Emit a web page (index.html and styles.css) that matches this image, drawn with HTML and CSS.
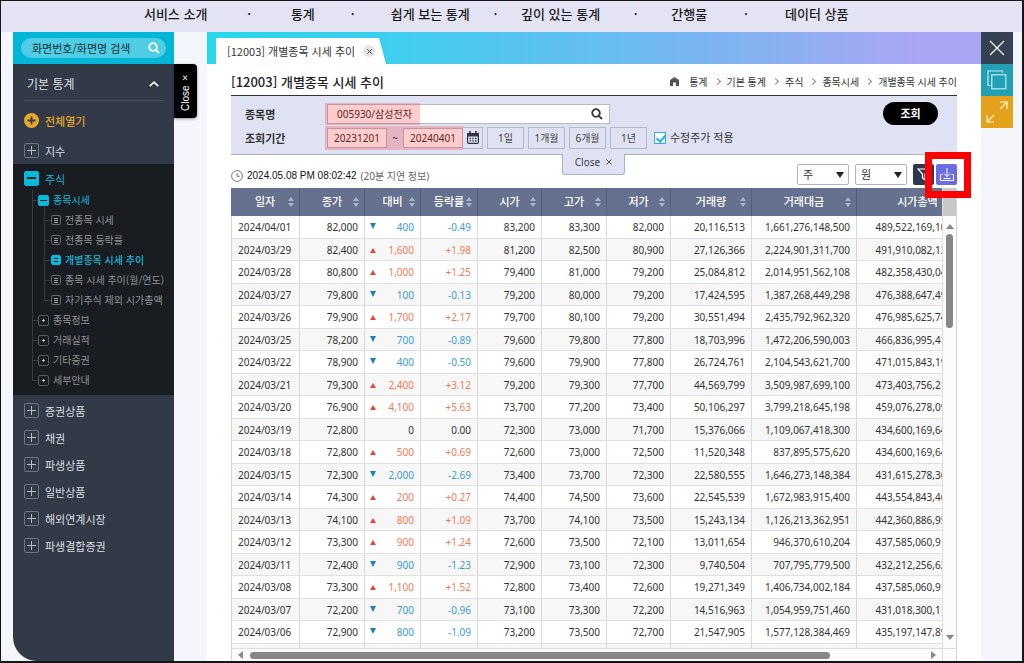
FILE: index.html
```html
<!DOCTYPE html>
<html lang="ko">
<head>
<meta charset="utf-8">
<meta name="viewport" content="width=device-width, initial-scale=1">
<title>[12003] 개별종목 시세 추이</title>
<link rel="stylesheet" href="styles.css">
</head>
<body>
<div class="app">
  <nav class="topnav" aria-label="주 메뉴">
    <a href="#">서비스 소개</a><i>·</i><a href="#">통계</a><i>·</i><a href="#">쉽게 보는 통계</a><i>·</i><a href="#">깊이 있는 통계</a><i>·</i><a href="#">간행물</a><i>·</i><a href="#">데이터 상품</a>
  </nav>

  <div class="layout">
    <aside class="sidebar">
      <form class="side-search">
        <div class="pill">
          <input type="text" aria-label="화면 검색" placeholder="화면번호/화면명 검색">
          <button type="button" aria-label="검색"><svg width="12" height="12" viewBox="0 0 12 12" fill="none" stroke="#fff" stroke-width="1.8"><circle cx="5" cy="5" r="3.8"/><path d="M8 8l3 3"/></svg></button>
        </div>
      </form>
      <button type="button" class="side-title">기본 통계
        <svg width="10" height="6" viewBox="0 0 10 6" fill="none" stroke="#fff" stroke-width="1.6"><path d="M.8 5.2L5 1.2l4.200 4"/></svg>
      </button>
      <a href="#" class="open-all"><svg width="15" height="15" viewBox="0 0 15 15"><circle cx="7.500" cy="7.500" r="7.500" fill="#e9a826"/><path d="M7.500 3.500v8M3.500 7.500h8" stroke="#313a46" stroke-width="1.800"/></svg>전체열기</a>
      <ul class="menu">
        <li><a href="#" class="m1"><span class="box plus"></span>지수</a></li>
        <li class="opened">
          <a href="#" class="m1 on"><span class="box minus"></span>주식</a>
          <ul class="tree">
            <li>
              <a href="#" class="m2 on"><span class="box2 minus"></span>종목시세</a>
              <ul class="leaves">
                <li><a href="#"><span class="doc"></span>전종목 시세</a></li>
                <li><a href="#"><span class="doc"></span>전종목 등락률</a></li>
                <li><a href="#" class="on"><span class="doc"></span>개별종목 시세 추이</a></li>
                <li><a href="#"><span class="doc"></span>종목 시세 추이(월/연도)</a></li>
                <li><a href="#"><span class="doc"></span>자기주식 제외 시가총액</a></li>
              </ul>
            </li>
            <li><a href="#" class="m2"><span class="box2 plus"></span>종목정보</a></li>
            <li><a href="#" class="m2"><span class="box2 plus"></span>거래실적</a></li>
            <li><a href="#" class="m2"><span class="box2 plus"></span>기타증권</a></li>
            <li><a href="#" class="m2"><span class="box2 plus"></span>세부안내</a></li>
          </ul>
        </li>
        <li><a href="#" class="m1"><span class="box plus"></span>증권상품</a></li>
        <li><a href="#" class="m1"><span class="box plus"></span>채권</a></li>
        <li><a href="#" class="m1"><span class="box plus"></span>파생상품</a></li>
        <li><a href="#" class="m1"><span class="box plus"></span>일반상품</a></li>
        <li><a href="#" class="m1"><span class="box plus"></span>해외연계시장</a></li>
        <li><a href="#" class="m1"><span class="box plus"></span>파생결합증권</a></li>
      </ul>
    </aside>

    <div class="side-gutter"><button type="button" class="side-close">Close ×</button></div>

    <main class="main">
      <div class="tabbar">
        <div class="tab"><span>[12003] 개별종목 시세 추이</span>
          <button type="button" aria-label="탭 닫기"><svg width="5" height="5" viewBox="0 0 5 5" stroke="#444" stroke-width="1"><path d="M.3 .3l4.400 4.400M4.700 .3L.3 4.700"/></svg></button>
        </div>
      </div>

      <div class="content">
        <header class="title-row">
          <h1>[12003] 개별종목 시세 추이</h1>
          <nav class="crumbs" aria-label="현재 위치">
            <svg width="9" height="9" viewBox="0 0 9 9" fill="#555"><path d="M4.500 0L9 3v6H5.900V5.500H3.100V9H0V3z"/></svg>
            <a href="#">통계</a><i></i><a href="#">기본 통계</a><i></i><a href="#">주식</a><i></i><a href="#">종목시세</a><i></i><a href="#">개별종목 시세 추이</a>
          </nav>
        </header>

        <form class="filter">
          <div class="fields">
            <label class="name" for="stock">종목명</label>
            <div class="control">
              <div class="stock">
                <input id="stock" type="text" value="005930/삼성전자">
                <button type="button" aria-label="종목 검색"><svg width="12" height="12" viewBox="0 0 12 12" fill="none" stroke="#333" stroke-width="1.800"><circle cx="5" cy="5" r="3.800"/><path d="M7.800 7.800l3.200 3.200"/></svg></button>
              </div>
              <span class="mark mark-stock"></span>
            </div>
            <label class="name" for="from">조회기간</label>
            <div class="control">
              <input id="from" class="date" type="text" value="20231201">
              <span class="tilde">~</span>
              <input class="date" type="text" aria-label="종료일" value="20240401">
              <button type="button" class="cal" aria-label="달력"><svg width="12" height="13" viewBox="0 0 12 13"><rect x=".600" y="2.600" width="10.800" height="9.800" rx="1.200" fill="none" stroke="#2e3547" stroke-width="1.200"/><path d="M0 2h12v3.500H0z" fill="#2e3547"/><path d="M3 0v3M9 0v3" stroke="#2e3547" stroke-width="1.600"/><path d="M5.300 7.500h1.400M8 7.500h1.400M2.600 9.900H4M5.300 9.900h1.400M8 9.900h1.400M2.600 7.500H4" stroke="#2e3547" stroke-width="1.300"/></svg></button>
              <button type="button" class="range">1일</button>
              <button type="button" class="range">1개월</button>
              <button type="button" class="range">6개월</button>
              <button type="button" class="range">1년</button>
              <input id="adj" class="check" type="checkbox" checked><label for="adj" class="check-label">수정주가 적용</label>
              <span class="mark mark-dates"></span>
            </div>
          </div>
          <button type="button" class="submit">조회</button>
          <button type="button" class="fold">Close <svg width="6" height="6" viewBox="0 0 6 6" stroke="#555" stroke-width="1"><path d="M.5 .5l5 5M5.500 .5l-5 5"/></svg></button>
        </form>

        <div class="toolbar">
          <svg width="12" height="12" viewBox="0 0 12 12" fill="none" stroke="#777" stroke-width="1"><circle cx="6" cy="6" r="5.400"/><path d="M6 3v3.300h2.800"/></svg>
          <span class="stamp">2024.05.08 PM 08:02:42</span>
          <span class="delay">(20분 지연 정보)</span>
          <div class="tools">
            <div class="pick"><select aria-label="수량 단위"><option>주</option></select></div>
            <div class="pick"><select aria-label="금액 단위"><option>원</option></select></div>
            <button type="button" class="tool funnel" aria-label="필터"><svg width="13" height="13" viewBox="0 0 13 13" fill="none" stroke="#fff" stroke-width="1.200"><path d="M1 1h11L8 6v6L5.500 10V6z"/></svg></button>
            <button type="button" class="tool download" aria-label="다운로드"><svg width="14" height="13" viewBox="0 0 14 13" fill="none" stroke="#fff" stroke-width="1"><path d="M7 0v8.500M3.800 5.500L7 8.700l3.200-3.200M2.500 6.500H.5v6h13v-6h-2M3.500 10.500h7"/></svg><span class="spot"></span></button>
          </div>
        </div>

        <div class="sheet">
          <div class="viewport">
            <table>
              <colgroup><col class="w69"><col class="w65"><col class="w56"><col class="w57"><col class="w64"><col class="w65"><col class="w64"><col class="w81"><col class="w105"><col class="w122"></colgroup>
              <thead><tr><th>일자<s></s></th><th>종가<s></s></th><th>대비<s></s></th><th>등락률<s></s></th><th>시가<s></s></th><th>고가<s></s></th><th>저가<s></s></th><th>거래량<s></s></th><th>거래대금<s></s></th><th>시가총액<s></s></th></tr></thead>
              <tbody>
                <tr class="dn"><td>2024/04/01</td><td>82,000</td><td>400</td><td>-0.49</td><td>83,200</td><td>83,300</td><td>82,000</td><td>20,116,513</td><td>1,661,276,148,500</td><td>489,522,169,100,000</td></tr>
                <tr class="up"><td>2024/03/29</td><td>82,400</td><td>1,600</td><td>+1.98</td><td>81,200</td><td>82,500</td><td>80,900</td><td>27,126,366</td><td>2,224,901,311,700</td><td>491,910,082,120,000</td></tr>
                <tr class="up"><td>2024/03/28</td><td>80,800</td><td>1,000</td><td>+1.25</td><td>79,400</td><td>81,000</td><td>79,200</td><td>25,084,812</td><td>2,014,951,562,108</td><td>482,358,430,040,000</td></tr>
                <tr class="dn"><td>2024/03/27</td><td>79,800</td><td>100</td><td>-0.13</td><td>79,200</td><td>80,000</td><td>79,200</td><td>17,424,595</td><td>1,387,268,449,298</td><td>476,388,647,490,000</td></tr>
                <tr class="up"><td>2024/03/26</td><td>79,900</td><td>1,700</td><td>+2.17</td><td>79,700</td><td>80,100</td><td>79,200</td><td>30,551,494</td><td>2,435,792,962,320</td><td>476,985,625,745,000</td></tr>
                <tr class="dn"><td>2024/03/25</td><td>78,200</td><td>700</td><td>-0.89</td><td>79,600</td><td>79,800</td><td>77,800</td><td>18,703,996</td><td>1,472,206,590,003</td><td>466,836,995,410,000</td></tr>
                <tr class="dn"><td>2024/03/22</td><td>78,900</td><td>400</td><td>-0.50</td><td>79,600</td><td>79,900</td><td>77,800</td><td>26,724,761</td><td>2,104,543,621,700</td><td>471,015,843,195,000</td></tr>
                <tr class="up"><td>2024/03/21</td><td>79,300</td><td>2,400</td><td>+3.12</td><td>79,200</td><td>79,300</td><td>77,700</td><td>44,569,799</td><td>3,509,987,699,100</td><td>473,403,756,215,000</td></tr>
                <tr class="up"><td>2024/03/20</td><td>76,900</td><td>4,100</td><td>+5.63</td><td>73,700</td><td>77,200</td><td>73,400</td><td>50,106,297</td><td>3,799,218,645,198</td><td>459,076,278,095,000</td></tr>
                <tr><td>2024/03/19</td><td>72,800</td><td>0</td><td>0.00</td><td>72,300</td><td>73,000</td><td>71,700</td><td>15,376,066</td><td>1,109,067,418,300</td><td>434,600,169,640,000</td></tr>
                <tr class="up"><td>2024/03/18</td><td>72,800</td><td>500</td><td>+0.69</td><td>72,600</td><td>73,000</td><td>72,500</td><td>11,520,348</td><td>837,895,575,620</td><td>434,600,169,640,000</td></tr>
                <tr class="dn"><td>2024/03/15</td><td>72,300</td><td>2,000</td><td>-2.69</td><td>73,400</td><td>73,700</td><td>72,300</td><td>22,580,555</td><td>1,646,273,148,384</td><td>431,615,278,365,000</td></tr>
                <tr class="up"><td>2024/03/14</td><td>74,300</td><td>200</td><td>+0.27</td><td>74,400</td><td>74,500</td><td>73,600</td><td>22,545,539</td><td>1,672,983,915,400</td><td>443,554,843,465,000</td></tr>
                <tr class="up"><td>2024/03/13</td><td>74,100</td><td>800</td><td>+1.09</td><td>73,700</td><td>74,100</td><td>73,500</td><td>15,243,134</td><td>1,126,213,362,951</td><td>442,360,886,955,000</td></tr>
                <tr class="up"><td>2024/03/12</td><td>73,300</td><td>900</td><td>+1.24</td><td>72,600</td><td>73,500</td><td>72,100</td><td>13,011,654</td><td>946,370,610,204</td><td>437,585,060,915,000</td></tr>
                <tr class="dn"><td>2024/03/11</td><td>72,400</td><td>900</td><td>-1.23</td><td>72,900</td><td>73,100</td><td>72,300</td><td>9,740,504</td><td>707,795,779,500</td><td>432,212,256,620,000</td></tr>
                <tr class="up"><td>2024/03/08</td><td>73,300</td><td>1,100</td><td>+1.52</td><td>72,800</td><td>73,400</td><td>72,600</td><td>19,271,349</td><td>1,406,734,002,184</td><td>437,585,060,915,000</td></tr>
                <tr class="dn"><td>2024/03/07</td><td>72,200</td><td>700</td><td>-0.96</td><td>73,100</td><td>73,300</td><td>72,200</td><td>14,516,963</td><td>1,054,959,751,460</td><td>431,018,300,110,000</td></tr>
                <tr class="dn"><td>2024/03/06</td><td>72,900</td><td>800</td><td>-1.09</td><td>73,200</td><td>73,500</td><td>72,700</td><td>21,547,905</td><td>1,577,128,384,469</td><td>435,197,147,895,000</td></tr>
                <tr><td></td><td></td><td></td><td></td><td></td><td></td><td></td><td></td><td></td><td></td></tr>
              </tbody>
            </table>
          </div>
          <div class="vbar"><span class="vcap"></span><span class="arrow a-up"></span><span class="vtrack"><span class="vthumb"></span></span><span class="arrow a-down"></span></div>
          <div class="hbar"><span class="arrow a-left"></span><span class="htrack"><span class="hthumb"></span></span><span class="arrow a-right"></span></div>
          <div class="corner"></div>
        </div>
      </div>
    </main>

    <div class="side-tools">
      <button type="button" class="t-close" aria-label="닫기"><svg width="16" height="16" viewBox="0 0 16 16" stroke="#fff" stroke-width="1.200"><path d="M1 1l14 14M15 1L1 15"/></svg></button>
      <button type="button" class="t-copy" aria-label="새 창"><svg width="20" height="20" viewBox="0 0 20 20" fill="none" stroke="#b9eef5" stroke-width="1.200"><path d="M15.500 3V1H1v14.500h2.500"/><rect x="4.800" y="4.800" width="14" height="14"/></svg></button>
      <button type="button" class="t-full" aria-label="전체 화면"><svg width="22" height="22" viewBox="0 0 22 22" fill="none" stroke="#fff3c8" stroke-width="1.200"><path d="M14 8l7-7M14 1h7v7M8 14l-7 7M1 14v7h7"/></svg></button>
    </div>
  </div>
</div>
</body>
</html>
```
FILE: styles.css
```css
* { box-sizing: border-box; }

body {
  margin: 0;
  font-family: "Noto Sans", "Noto Sans CJK KR", sans-serif;
  font-size: 11px;
  line-height: 16px;
  color: #333;
}

a { color: inherit; text-decoration: none; }
ul { list-style: none; margin: 0; padding: 0; }
i, s { font-style: normal; text-decoration: none; }
svg { display: block; flex: none; }
button, input, select { font: inherit; color: inherit; margin: 0; padding: 0; border: 0; background: none; }
button { cursor: pointer; }

.app {
  display: flex;
  flex-direction: column;
  height: 100vh;
  border: 1px solid #15151a;
  border-right-width: 2px;
  border-bottom-width: 2px;
  background: #f4f6fb;
  overflow: hidden;
}

/* top navigation */
.topnav {
  display: grid;
  grid-template-columns: auto 88fr auto 80fr auto 54fr auto 75fr auto 82fr auto;
  align-items: center;
  height: 31px;
  padding: 0 17% 6px 14%;
  background: #e3e3f3;
  font-family: "Noto Sans CJK KR", sans-serif;
  font-size: 13px;
  font-weight: 500;
  color: #1c1c22;
}
.topnav i { text-align: center; }

.layout { flex: 1; min-height: 0; display: flex; padding: 0 9px 0 12px; }

/* sidebar */
.sidebar {
  width: 161px;
  flex: none;
  background: #313a46;
  border-radius: 0 0 0 24px;
  overflow: hidden;
  color: #dcdfe3;
  font-family: "Noto Sans CJK KR", sans-serif;
}
.side-search { padding: 6px 8px; background: #00b6d6; }
.pill {
  display: flex;
  align-items: center;
  height: 20px;
  padding: 0 6px 0 11px;
  border-radius: 10px;
  background: #4fcde4;
}
.pill input { flex: 1; min-width: 0; height: 20px; outline: 0; color: #14303a; }
.pill input::placeholder { color: #14303a; opacity: 1; }
.side-title {
  display: flex;
  align-items: center;
  justify-content: space-between;
  width: 139px;
  height: 37px;
  margin: 0 11px;
  padding: 4px 4px 0 3px;
  border-bottom: 1px solid #4b535f;
  font-size: 12px;
}
.open-all { display: flex; align-items: center; gap: 6px; height: 36px; padding: 3px 0 0 11px; font-weight: 500; color: #e5a328; }
.m1 { display: flex; align-items: center; gap: 6px; height: 27px; padding-left: 11px; }
.m1.on, .m2.on, .leaves .on { color: #19b7d8; }
.m1.on { height: 26px; padding-top: 3px; }

.box, .box2 {
  position: relative;
  flex: none;
  width: 15px;
  height: 15px;
  border: 1px solid #6d7580;
  border-radius: 2px;
}
.box2 { width: 11px; height: 11px; border-color: #555a60; }
.box::before, .box.plus::after, .box2::before, .box2.plus::after {
  content: "";
  position: absolute;
  inset: 6px 2px;
  background: #b6bbc2;
}
.box.plus::after { inset: 2px 6px; }
.box2::before { inset: 4px 3px; }
.box2.plus::after { inset: 3px 4px; }
.on .minus, .on.m2 .minus { border-color: #0cb8da; background: #0cb8da; }
.on .box.minus::before { inset: 5px 2px 6px; background: #14242c; }
.on .box2.minus::before { inset: 4px 1px; background: #14242c; }

.opened { padding-bottom: 5px; margin-bottom: 2px; background: #191d22; }
.tree { position: relative; font-size: 10px; color: #8f9195; }
.tree::before {
  content: "";
  position: absolute;
  left: 19px;
  top: 0;
  bottom: 10px;
  border-left: 1px solid #373b41;
}
.m2 { position: relative; display: flex; align-items: center; gap: 4px; height: 20px; padding-left: 25px; }
.m2::before, .leaves a::before {
  content: "";
  position: absolute;
  left: 19px;
  width: 6px;
  border-top: 1px solid #373b41;
}
.leaves { position: relative; }
.leaves::before {
  content: "";
  position: absolute;
  left: 31px;
  top: -4px;
  bottom: 10px;
  border-left: 1px solid #373b41;
}
.leaves a { position: relative; display: flex; align-items: center; gap: 4px; height: 20px; padding-left: 38px; white-space: nowrap; }
.leaves a::before { left: 31px; width: 7px; }
.leaves .on { font-weight: 500; }
.doc {
  flex: none;
  width: 10px;
  height: 10px;
  border: 1px solid #62666b;
  border-radius: 2px;
  background: repeating-linear-gradient(#9a9ca0 0 1px, transparent 1px 2px) center / 4px 5px no-repeat;
}
.on .doc { border-color: #0cb8da; background: linear-gradient(#191d22 1px, transparent 1px 3px, #191d22 3px) center / 4px 4px no-repeat #0cb8da; }

.side-gutter { width: 33px; flex: none; padding-top: 32px; }
.side-close {
  width: 23px;
  height: 54px;
  border-radius: 4px 0 0 4px;
  background: #000;
  color: #fff;
  font-family: "Liberation Sans", sans-serif;
  font-size: 10px;
  writing-mode: vertical-rl;
  transform: rotate(180deg);
  box-shadow: 0 -1px 3px rgba(0, 0, 0, .4);
}

/* main panel */
.main { flex: 1; min-width: 0; display: flex; flex-direction: column; background: #fff; }
.tabbar {
  flex: none;
  padding: 6px 9px 0;
  background: linear-gradient(90deg, #27d8e9, #3fcdee 25%, #7bb4f0 65%, #a9a6f3 92%);
}
.tab {
  display: flex;
  align-items: center;
  gap: 8px;
  width: 170px;
  height: 26px;
  padding-left: 11px;
  background: #fff;
  clip-path: polygon(0 0, 163px 0, 170px 100%, 0 100%);
  font-family: "Noto Sans CJK KR", sans-serif;
  white-space: nowrap;
}
.tab button { display: grid; place-items: center; width: 12px; height: 12px; border-radius: 6px; background: #e4e4e4; }

.content { flex: 1; min-height: 0; display: flex; flex-direction: column; padding: 0 24px; }
.title-row { display: flex; align-items: center; justify-content: space-between; height: 32px; padding-top: 4px; border-bottom: 1px solid #333; flex: none; }
h1 { margin: 0; font-family: "Noto Sans CJK KR", sans-serif; font-size: 13px; font-weight: 500; color: #222; }
.crumbs { display: flex; align-items: center; gap: 7px; font-size: 10px; white-space: nowrap; }
.crumbs svg { margin-right: 3px; }
.crumbs i { width: 5px; height: 5px; border: solid #888; border-width: 1px 1px 0 0; transform: rotate(45deg); }

.filter {
  position: relative;
  flex: none;
  display: flex;
  justify-content: space-between;
  align-items: flex-start;
  padding: 6px 19px 5px 14px;
  border-bottom: 1px solid #aab0cb;
  background: #dfe2f2;
}
.fields { display: grid; grid-template-columns: 82px auto; align-items: center; grid-template-rows: 24px 23px; }
.name { font-family: "Noto Sans CJK KR", sans-serif; font-weight: 700; }
.control { position: relative; display: flex; align-items: center; font-size: 10px; }
.stock { display: flex; align-items: center; width: 283px; height: 20px; padding: 0 6px 0 9px; border: 1px solid #b5bacb; background: #fff; }
.stock input { flex: 1; min-width: 0; outline: 0; }
.date { width: 60px; height: 20px; border: 1px solid #b5bacb; background: #fff; text-align: center; }
.tilde { width: 16px; text-align: center; }
.cal { display: grid; place-items: center; width: 20px; height: 22px; border: 1px solid #b5bacb; border-left: 0; }
.range { width: 37px; height: 22px; margin-left: 4px; border: 1px solid #b5bacb; color: #444; }
.check {
  appearance: none;
  position: relative;
  width: 12px;
  height: 12px;
  margin: 0 4px 0 7px;
  border: 1px solid #27b5cf;
  background: #fff;
}
.check:checked::after {
  content: "";
  position: absolute;
  left: 3px;
  top: 0;
  width: 4px;
  height: 7px;
  border: solid #27b5cf;
  border-width: 0 2px 2px 0;
  transform: rotate(40deg);
}
.check-label { font-size: 11px; }
.mark { position: absolute; background: rgba(255, 0, 0, .2); pointer-events: none; }
.mark-stock { left: -2px; top: -1px; width: 95px; height: 22px; }
.mark-dates { left: -2px; top: -1px; width: 138px; height: 24px; }
.submit { width: 55px; height: 23px; border-radius: 12px; background: #000; color: #fff; font-weight: 700; }
.fold {
  position: absolute;
  left: 50%;
  top: 100%;
  display: flex;
  align-items: center;
  justify-content: center;
  gap: 6px;
  width: 63px;
  height: 21px;
  margin-left: -32px;
  padding-bottom: 4px;
  border: 1px solid #aab0cb;
  border-top: 0;
  border-radius: 0 0 3px 3px;
  background: #dfe2f2;
  font-size: 10px;
  color: #444;
}

.toolbar { flex: none; display: flex; align-items: center; gap: 4px; height: 33px; padding-top: 9px; }
.stamp { font-family: "Liberation Sans", sans-serif; font-size: 10px; color: #111; }
.delay { font-size: 10px; color: #666; }
.tools { display: flex; align-items: center; gap: 6px; margin-left: auto; margin-top: -3px; }
.pick { position: relative; }
.pick select { appearance: none; display: block; width: 52px; height: 21px; padding: 0 5px; border: 1px solid #b4b4b4; border-radius: 2px; background: #fff; }
.pick::after {
  content: "";
  position: absolute;
  right: 5px;
  top: 8px;
  border: 4px solid transparent;
  border-top: 6px solid #222;
  border-bottom: 0;
  pointer-events: none;
}
.tool { position: relative; display: grid; place-items: center; width: 21px; height: 21px; border-radius: 2px; }
.funnel { background: #2e3850; }
.download { margin-left: -4px; background: #6c6ce2; }
.spot { position: absolute; inset: -12px -14px -13px -11px; border: 7px solid #f00; z-index: 2; }

/* data sheet */
.sheet { flex: 1; min-height: 0; display: grid; grid-template-columns: minmax(0, 1fr) 14px; grid-template-rows: minmax(0, 1fr) 13px; border-right: 1px solid #d4d4d4; }
.viewport { overflow: auto; scrollbar-width: none; }
table { width: 748px; table-layout: fixed; border-collapse: separate; border-spacing: 0; font-size: 10px; line-height: 14px; }
.w56 { width: 56px; }
.w57 { width: 57px; }
.w64 { width: 64px; }
.w65 { width: 65px; }
.w69 { width: 69px; }
.w81 { width: 81px; }
.w105 { width: 105px; }
.w122 { width: 122px; }
th { position: relative; height: 28px; padding: 0; background: #66718f; border-right: 1px solid #525d7c; color: #fff; font-size: 11px; font-weight: 500; }
th s::before, th s::after { content: ""; position: absolute; right: 5px; border: 3px solid transparent; }
th s::before { top: 9px; border-top: 0; border-bottom: 4px solid #a9b3cc; }
th s::after { top: 15px; border-bottom: 0; border-top: 4px solid #a9b3cc; }
td { height: 22px; padding: 0 6px 0 5px; border-right: 1px solid #d9d9d9; border-bottom: 1px solid #e0e0e0; text-align: right; }
tbody tr:nth-child(odd) td { height: 23px; }
tbody tr:nth-child(even) td { background: #f7f7f7; }
td:first-child { padding: 0 0 0 6px; border-left: 1px solid #d4d4d4; text-align: left; }
.dn td:nth-child(3), .dn td:nth-child(4) { color: #3d9bd3; }
.up td:nth-child(3), .up td:nth-child(4) { color: #ee7c56; }
.dn td:nth-child(3)::before, .up td:nth-child(3)::before { content: ""; float: left; margin-top: 3px; border: 3px solid transparent; }
.dn td:nth-child(3)::before { border-top: 6px solid #1c7fb8; border-bottom: 0; }
.up td:nth-child(3)::before { margin-top: 5px; border-bottom: 5px solid #e0483e; border-top: 0; }

.vbar, .hbar, .corner { background: #fbfbfb; }
.vbar { display: flex; flex-direction: column; align-items: center; border-left: 1px solid #ddd; }
.vcap { align-self: stretch; height: 28px; background: #c8c8c8; }
.arrow { border: 4px solid transparent; flex: none; }
.a-up { margin: 8px 0 5px; border-top: 0; border-bottom: 5px solid #888; }
.a-down { margin-bottom: 8px; border-bottom: 0; border-top: 5px solid #888; }
.vtrack { flex: 1; }
.vthumb { display: block; width: 7px; height: 94px; border-radius: 4px; background: #878787; }
.hbar { display: flex; align-items: center; padding: 0 6px; border-top: 1px solid #ddd; border-left: 1px solid #d4d4d4; }
.a-left { border-left: 0; border-right: 5px solid #888; }
.a-right { border-right: 0; border-left: 5px solid #888; }
.htrack { flex: 1; padding: 0 7px; }
.hthumb { display: block; width: 86%; height: 7px; border-radius: 4px; background: #878787; }
.corner { border: solid #ddd; border-width: 1px 0 0 1px; }

/* window tools */
.side-tools { width: 32px; flex: none; display: flex; flex-direction: column; }
.side-tools button { display: grid; place-items: center; height: 32px; }
.t-close { background: #354052; }
.t-copy { background: #239fb5; }
.t-full { background: #e3a11c; }
```
